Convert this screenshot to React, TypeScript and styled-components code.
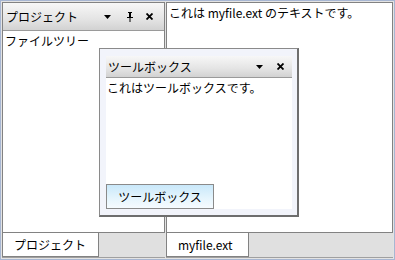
import React from 'react'
import styled, { createGlobalStyle } from 'styled-components'

const Global = createGlobalStyle`
  body {
    margin: 0;
    font-family: 'Noto Sans CJK JP', 'Noto Sans', sans-serif;
    font-size: 12px;
    color: #000;
  }
`

const Frame = styled.div`
  position: relative;
  box-sizing: border-box;
  width: 395px;
  height: 260px;
  border: 1px solid #a7b6d2;
  background: #e3e3e3;
  padding: 1px;
  display: grid;
  grid-template-columns: 163px 1fr;
  column-gap: 1px;
`

const Column = styled.div`
  display: flex;
  flex-direction: column;
  min-width: 0;
`

const Pane = styled.div`
  flex: 1;
  display: flex;
  flex-direction: column;
  border: 1px solid #828282;
  box-shadow: inset 1px 1px 0 #ffffff;
  background: #fff;
`

const Header = styled.div`
  height: 27px;
  display: flex;
  align-items: center;
  padding: 0 11px 0 3px;
  background: linear-gradient(#f7f7f7, #e4e4e4 60%, #d2d2d2);
  border-bottom: 1px solid #9a9a9a;
  gap: 13px;
`

const Title = styled.span`
  flex: 1;
  line-height: 1;
`

const Glyph = styled.span<{ $after?: number }>`
  display: flex;
  align-items: center;
  margin-right: ${p => p.$after ?? 0}px;
`

const Body = styled.div`
  flex: 1;
  padding: 2px 2px;
  line-height: 16px;
  white-space: nowrap;
`

const TabStrip = styled.div`
  height: 24px;
  display: flex;
  background: #e0e0e0;
  border-bottom: 1px solid #a0a0a0;
`

const Tab = styled.div<{ $w: number }>`
  width: ${p => p.$w}px;
  box-sizing: border-box;
  background: #fff;
  border: 1px solid #828282;
  border-top: none;
  display: flex;
  align-items: center;
  padding-left: 11px;
  padding-bottom: 1px;
`

const Floating = styled.div`
  position: absolute;
  left: 98px;
  top: 47px;
  width: 200px;
  height: 169px;
  box-sizing: border-box;
  border: 1px solid #8a8a8a;
  border-right: 2px solid #6e6e6e;
  border-bottom: 2px solid #6e6e6e;
  background: #f2f4fb;
  padding: 7px 5px 6px 6px;
  display: flex;
`

const FloatInner = styled.div`
  flex: 1;
  display: flex;
  flex-direction: column;
  background: #fff;
`

const FloatHeader = styled(Header)`
  height: 21px;
  padding: 0 8px 0 2px;
  gap: 14px;
`

const FloatBody = styled.div`
  flex: 1;
  padding: 2px 1px;
  line-height: 16px;
`

const BottomButton = styled.div`
  width: 108px;
  height: 25px;
  box-sizing: border-box;
  border: 1px solid #8a8a8a;
  background: linear-gradient(#c9e8fa, #e6f5fd 60%, #f6fbff);
  display: flex;
  align-items: center;
  justify-content: center;
`

const Arrow = () => (
  <svg width="7" height="4" viewBox="0 0 7 4">
    <path d="M0 0h7L3.5 4z" fill="#000" />
  </svg>
)

const Pin = () => (
  <svg width="6" height="10" viewBox="0 0 6 10">
    <path d="M1 0h4v1H4v4h2v1H3.5v4h-1V6H0V5h2V1H1z" fill="#000" />
  </svg>
)

const Close = () => (
  <svg width="7" height="7" viewBox="0 0 7 7">
    <path d="M0.5 0.5l6 6M6.5 0.5l-6 6" stroke="#000" strokeWidth="1.8" />
  </svg>
)

export default function App() {
  return (
    <>
      <Global />
      <Frame>
        <Column>
          <Pane>
            <Header>
              <Title>プロジェクト</Title>
              <Glyph $after={3}><Arrow /></Glyph>
              <Glyph><Pin /></Glyph>
              <Glyph><Close /></Glyph>
            </Header>
            <Body>ファイルツリー</Body>
          </Pane>
          <TabStrip>
            <Tab $w={97}>プロジェクト</Tab>
          </TabStrip>
        </Column>
        <Column>
          <Pane>
            <Body>これは myfile.ext のテキストです。</Body>
          </Pane>
          <TabStrip>
            <Tab $w={83}>myfile.ext</Tab>
          </TabStrip>
        </Column>
        <Floating>
          <FloatInner>
            <FloatHeader>
              <Title>ツールボックス</Title>
              <Glyph><Arrow /></Glyph>
              <Glyph><Close /></Glyph>
            </FloatHeader>
            <FloatBody>これはツールボックスです。</FloatBody>
            <BottomButton>ツールボックス</BottomButton>
          </FloatInner>
        </Floating>
      </Frame>
    </>
  )
}
